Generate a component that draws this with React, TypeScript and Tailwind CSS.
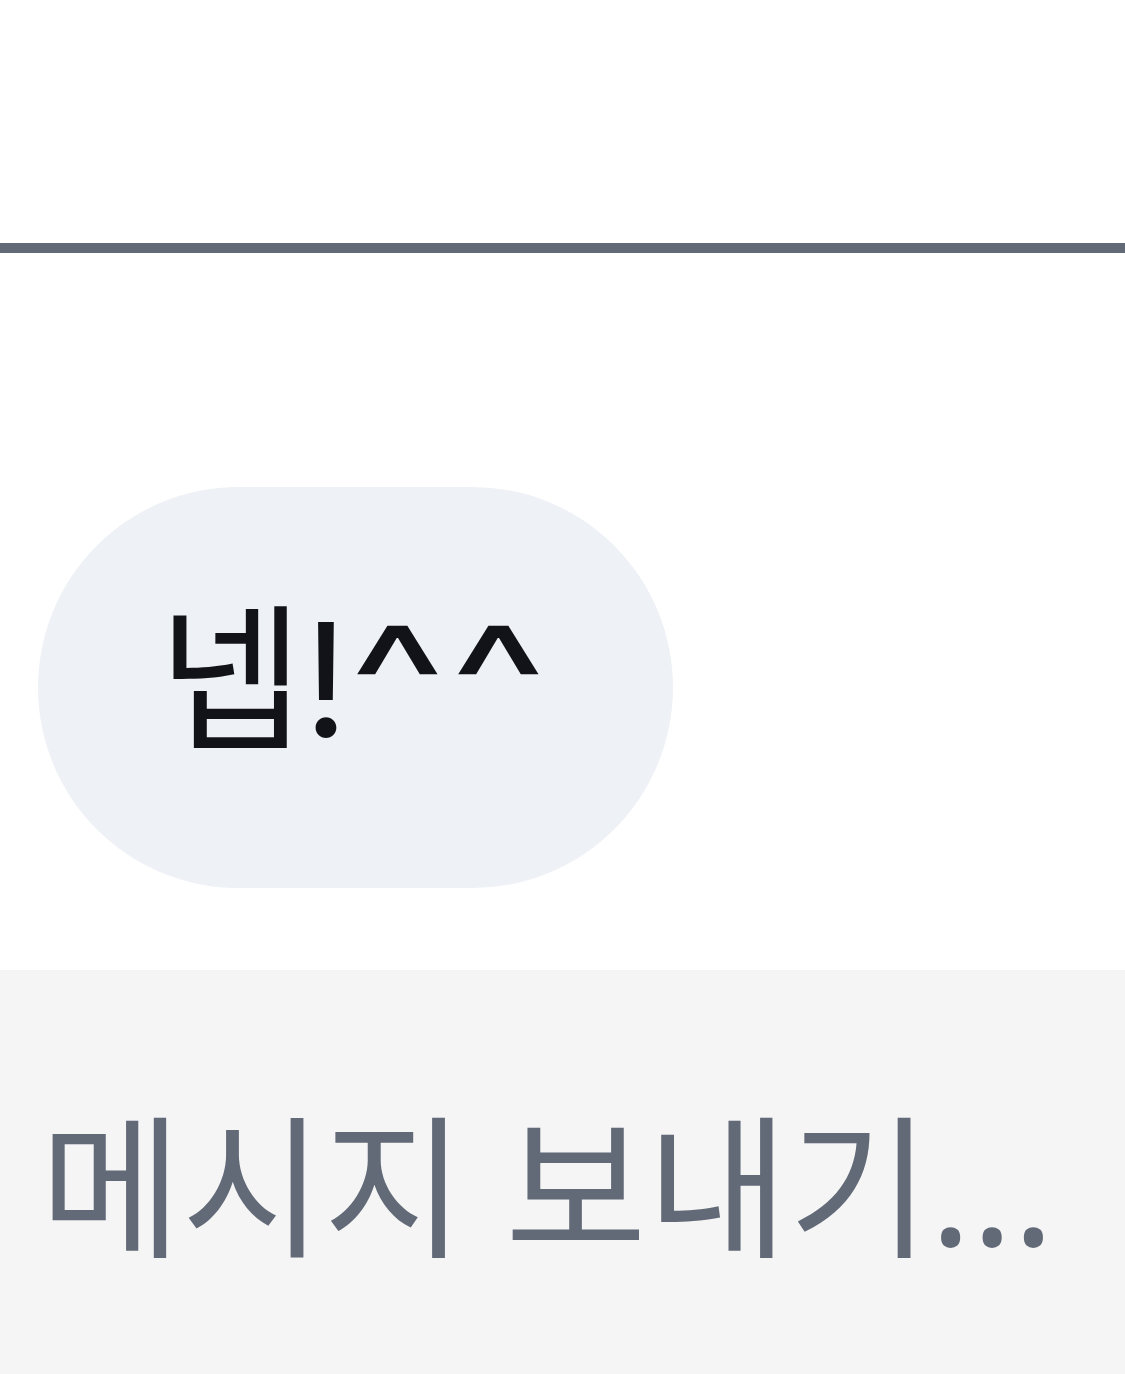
export default function App() {
  return (
    <div className="w-[1125px] h-[1374px] overflow-hidden bg-white flex flex-col font-['Noto_Sans','Noto_Sans_CJK_KR',sans-serif]">
      {/* header area */}
      <div className="h-[243px] shrink-0" />
      <div className="h-[10px] shrink-0 bg-[#636a77]" />

      {/* messages */}
      <div className="flex-1 flex flex-col justify-end pb-[82px] pl-[38px]">
        <div className="w-[635px] h-[401px] rounded-full bg-[#eef1f5] flex items-center pl-[120px] pb-[16px]">
          <span className="text-[158px] leading-none text-[#111318] font-['Inter','Noto_Sans_CJK_KR',sans-serif] whitespace-nowrap">
            넵!
            <span className="inline-block origin-left scale-x-[1.3] tracking-[0.02em]">^^</span>
          </span>
        </div>
      </div>

      {/* input */}
      <div className="h-[404px] shrink-0 bg-[#f5f5f6] flex items-center pl-[40px] pt-[27px]">
        <span className="text-[154px] leading-none text-[#636a77]">메시지 보내기...</span>
      </div>
    </div>
  );
}
